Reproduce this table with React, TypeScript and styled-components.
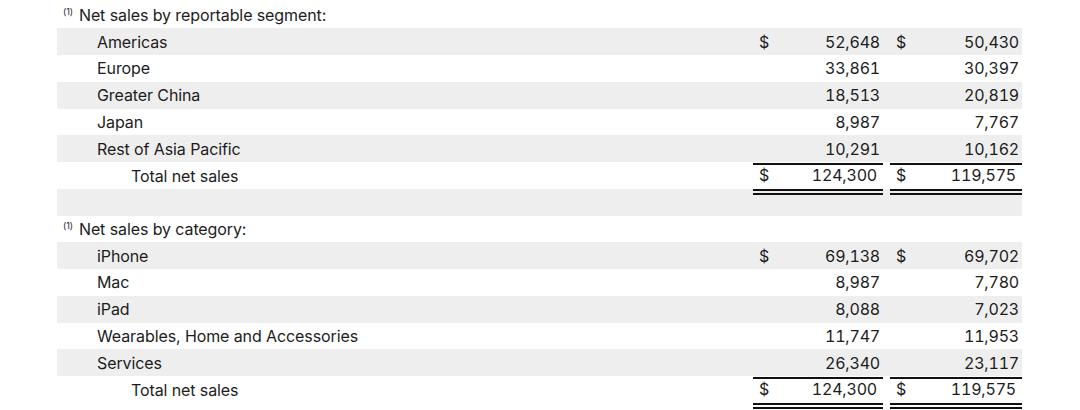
import React, { FC } from 'react';
import styled, { createGlobalStyle } from 'styled-components';

const GlobalStyle = createGlobalStyle`
  html, body {
    margin: 0;
    padding: 0;
    background: #ffffff;
  }
  body {
    font-family: Inter, 'Noto Sans', 'Liberation Sans', sans-serif;
    color: #1c1c1c;
  }
`;

const Sheet = styled.div`
  width: 965px;
  padding: 1.5px 0 10px 57px;
`;

const Row = styled.div<{ shaded?: boolean }>`
  display: grid;
  grid-template-columns: 1fr 130px 132px;
  column-gap: 7px;
  height: 26.75px;
  align-items: center;
  background: ${(p) => (p.shaded ? '#eeeeee' : 'transparent')};
`;

const Heading = styled.div`
  grid-column: 1 / -1;
  padding-left: 6px;
  font-size: 16px;
  letter-spacing: -0.1px;
  white-space: nowrap;

  sup {
    font-size: 9px;
    margin-right: 6px;
    vertical-align: 6px;
    line-height: 0;
  }
`;

const Label = styled.div<{ indent?: number }>`
  padding-left: ${(p) => 40 + (p.indent || 0)}px;
  font-size: 16px;
  letter-spacing: -0.1px;
  white-space: nowrap;
`;

const Amount = styled.div<{ total?: boolean }>`
  display: flex;
  justify-content: space-between;
  align-items: center;
  box-sizing: border-box;
  font-size: 16px;
  font-variant-numeric: tabular-nums;
  letter-spacing: -0.2px;
  padding: 0 3px 0 6px;
  position: relative;
  z-index: 1;
  ${(p) =>
    p.total &&
    `
    align-self: start;
    height: 32px;
    margin-top: 0.5px;
    padding-right: 6px;
    padding-bottom: 3px;
    border-top: 2px solid #111;
    border-bottom: 6px double #111;
  `}
`;

const TotalLabel = styled(Label)`
  align-self: start;
  padding-top: 4px;
`;

interface ILine {
  label: string;
  a: string;
  b: string;
  dollar?: boolean;
}

interface ISection {
  title: string;
  lines: ILine[];
  total: [string, string];
}

const sections: ISection[] = [
  {
    title: 'Net sales by reportable segment:',
    lines: [
      { label: 'Americas', a: '52,648', b: '50,430', dollar: true },
      { label: 'Europe', a: '33,861', b: '30,397' },
      { label: 'Greater China', a: '18,513', b: '20,819' },
      { label: 'Japan', a: '8,987', b: '7,767' },
      { label: 'Rest of Asia Pacific', a: '10,291', b: '10,162' },
    ],
    total: ['124,300', '119,575'],
  },
  {
    title: 'Net sales by category:',
    lines: [
      { label: 'iPhone', a: '69,138', b: '69,702', dollar: true },
      { label: 'Mac', a: '8,987', b: '7,780' },
      { label: 'iPad', a: '8,088', b: '7,023' },
      { label: 'Wearables, Home and Accessories', a: '11,747', b: '11,953' },
      { label: 'Services', a: '26,340', b: '23,117' },
    ],
    total: ['124,300', '119,575'],
  },
];

const Section: FC<{ section: ISection }> = ({ section }) => (
  <>
    <Row>
      <Heading>
        <sup>(1)</sup>
        {section.title}
      </Heading>
    </Row>
    {section.lines.map((l, i) => (
      <Row key={l.label} shaded={i % 2 === 0}>
        <Label>{l.label}</Label>
        <Amount>
          <span>{l.dollar ? '$' : ''}</span>
          <span>{l.a}</span>
        </Amount>
        <Amount>
          <span>{l.dollar ? '$' : ''}</span>
          <span>{l.b}</span>
        </Amount>
      </Row>
    ))}
    <Row>
      <TotalLabel indent={34}>Total net sales</TotalLabel>
      <Amount total>
        <span>$</span>
        <span>{section.total[0]}</span>
      </Amount>
      <Amount total>
        <span>$</span>
        <span>{section.total[1]}</span>
      </Amount>
    </Row>
  </>
);

const App: FC = () => (
  <>
    <GlobalStyle />
    <Sheet>
      <Section section={sections[0]} />
      <Row shaded />
      <Section section={sections[1]} />
    </Sheet>
  </>
);

export default App;
